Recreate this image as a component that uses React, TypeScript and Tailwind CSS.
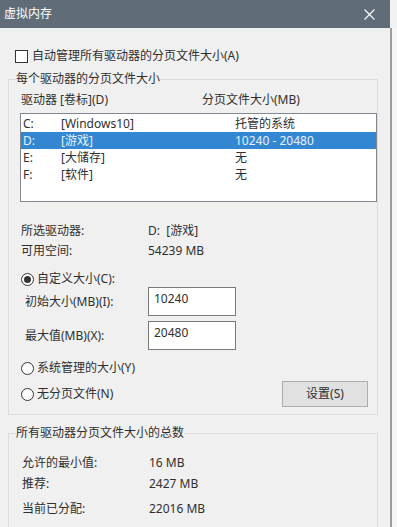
import React from "react";

const rows = [
  { d: "C:", l: "[Windows10]", s: "托管的系统", sel: false },
  { d: "D:", l: "[游戏]", s: "10240 - 20480", sel: true },
  { d: "E:", l: "[大储存]", s: "无", sel: false },
  { d: "F:", l: "[软件]", s: "无", sel: false },
];

function Radio({ checked }: { checked?: boolean }) {
  return (
    <span className="w-[13px] h-[13px] rounded-full border border-[#333] bg-white flex items-center justify-center shrink-0">
      {checked && <span className="w-[7px] h-[7px] rounded-full bg-[#333]" />}
    </span>
  );
}

export default function App() {
  return (
    <div className="w-[397px] h-[527px] overflow-hidden flex bg-[#f4f4f4] font-['Noto_Sans','Noto_Sans_CJK_SC',sans-serif] text-[12px] leading-[16px] text-[#2f2f2f]">
      <div className="w-[390px] h-[527px] flex flex-col shrink-0">
        {/* title bar */}
        <div className="h-[28px] shrink-0 bg-[#606c78] flex items-center justify-between pl-[4px] pr-[10px] text-white">
          <span>虚拟内存</span>
          <svg width="11" height="11" viewBox="0 0 11 11" className="mr-[5px]">
            <path d="M0.5 0.5 L10.5 10.5 M10.5 0.5 L0.5 10.5" stroke="#ffffff" strokeWidth="1.1" />
          </svg>
        </div>
        {/* body */}
        <div className="flex-1 min-h-0 overflow-hidden bg-[#f0f0f0] flex flex-col">
          <div className="mt-[20px] h-[16px] shrink-0 flex items-center pl-[15px]">
            <span className="w-[13px] h-[13px] border border-[#333] bg-white shrink-0" />
            <span className="ml-[4px]">自动管理所有驱动器的分页文件大小(A)</span>
          </div>

          <fieldset className="mt-[7px] ml-[8px] w-[370px] shrink-0 border border-[#dcdcdc] pb-[7px]">
            <legend className="ml-[7px] px-0 leading-[16px]">每个驱动器的分页文件大小</legend>
            <div className="mt-[5px] h-[16px] flex pl-[12px]">
              <span className="w-[181px]">驱动器 [卷标](D)</span>
              <span>分页文件大小(MB)</span>
            </div>
            <div className="mt-[5px] ml-[11px] h-[89px] border border-[#828790] bg-white pt-[1px]">
              {rows.map((r) => (
                <div
                  key={r.d}
                  className={
                    r.sel
                      ? "h-[17px] flex items-center pl-[2px] bg-[#3387d2] text-[#e8f1fb]"
                      : "h-[17px] flex items-center pl-[2px]"
                  }
                >
                  <span className="w-[38px]">{r.d}</span>
                  <span className="w-[174px]">{r.l}</span>
                  <span>{r.s}</span>
                </div>
              ))}
            </div>

            <div className="mt-[21px] h-[16px] flex pl-[12px]">
              <span className="w-[127px]">所选驱动器:</span>
              <span>D:&nbsp;&nbsp;[游戏]</span>
            </div>
            <div className="mt-[4px] h-[16px] flex pl-[12px]">
              <span className="w-[127px]">可用空间:</span>
              <span>54239 MB</span>
            </div>

            <div className="mt-[12px] h-[16px] flex items-center pl-[12px]">
              <Radio checked />
              <span className="ml-[3px]">自定义大小(C):</span>
            </div>
            <div className="h-[29px] flex items-center pl-[16px]">
              <span className="w-[123px]">初始大小(MB)(I):</span>
              <div className="w-[88px] h-[29px] border border-[#7a7a7a] bg-white pl-[5px] pt-[3px]">10240</div>
            </div>
            <div className="mt-[5px] h-[29px] flex items-center pl-[16px]">
              <span className="w-[123px]">最大值(MB)(X):</span>
              <div className="w-[88px] h-[29px] border border-[#7a7a7a] bg-white pl-[5px] pt-[3px]">20480</div>
            </div>

            <div className="mt-[10px] h-[16px] flex items-center pl-[12px]">
              <Radio />
              <span className="ml-[3px]">系统管理的大小(Y)</span>
            </div>
            <div className="mt-[5px] h-[26px] flex items-center justify-between pl-[12px] pr-[9px]">
              <div className="flex items-center">
                <Radio />
                <span className="ml-[3px]">无分页文件(N)</span>
              </div>
              <div className="w-[86px] h-[26px] border border-[#adadad] bg-[#e1e1e1] flex items-center justify-center">
                设置(S)
              </div>
            </div>
          </fieldset>

          <fieldset className="mt-[10px] ml-[8px] w-[370px] shrink-0 border border-[#dcdcdc] pb-[40px]">
            <legend className="ml-[7px] px-0 leading-[16px]">所有驱动器分页文件大小的总数</legend>
            <div className="mt-[14px] h-[16px] flex pl-[13px]">
              <span className="w-[127px]">允许的最小值:</span>
              <span>16 MB</span>
            </div>
            <div className="mt-[5px] h-[16px] flex pl-[13px]">
              <span className="w-[127px]">推荐:</span>
              <span>2427 MB</span>
            </div>
            <div className="mt-[9px] h-[16px] flex pl-[13px]">
              <span className="w-[127px]">当前已分配:</span>
              <span>22016 MB</span>
            </div>
          </fieldset>
        </div>
      </div>
      <div className="flex-1 flex flex-col">
        <div className="h-[28px] shrink-0 bg-[#f2f2f2]" />
        <div className="flex-1 flex">
          <div className="w-[2px] bg-[#9c9c9c]" />
          <div className="flex-1 bg-[#f6f6f6]" />
        </div>
      </div>
    </div>
  );
}
